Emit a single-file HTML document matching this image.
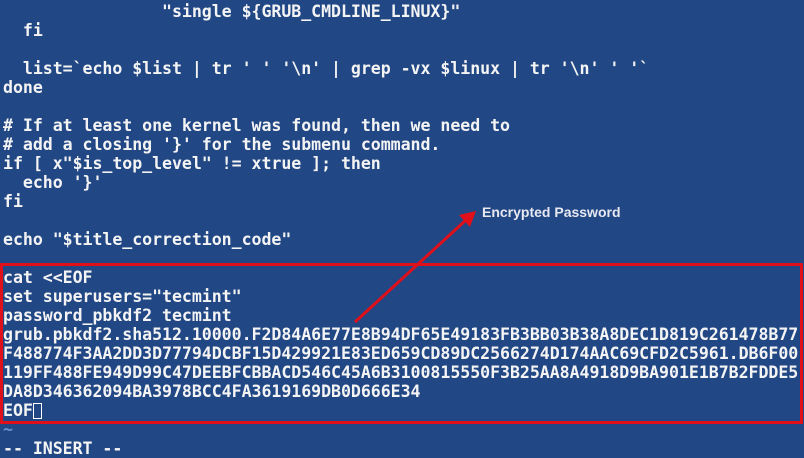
<!DOCTYPE html>
<html><head><meta charset="utf-8"><style>
html,body{margin:0;padding:0;}
body{width:804px;height:456px;background:#214785;overflow:hidden;position:relative;}
pre{position:absolute;left:3px;top:2px;margin:0;font-family:"DejaVu Sans Mono","Liberation Mono",monospace;font-size:16.6px;line-height:19px;color:#f4f4f4;font-weight:bold;letter-spacing:-0.05px;}
.box{position:absolute;left:0px;top:263px;width:797px;height:155px;border:3px solid #e0101a;}
.lbl{position:absolute;left:482px;top:204px;font-family:"Liberation Sans",sans-serif;font-weight:bold;font-size:14px;color:#e8e8f0;}
.cur{display:inline-block;width:9px;height:16px;border:1px solid #fff;vertical-align:-3px;box-sizing:border-box;}
.t{color:#6f8fd0;}
</style></head><body>
<pre>                "single ${GRUB_CMDLINE_LINUX}"
  fi

  list=`echo $list | tr ' ' '\n' | grep -vx $linux | tr '\n' ' '`
done

# If at least one kernel was found, then we need to
# add a closing '}' for the submenu command.
if [ x"$is_top_level" != xtrue ]; then
  echo '}'
fi

echo "$title_correction_code"

cat &lt;&lt;EOF
set superusers="tecmint"
password_pbkdf2 tecmint
grub.pbkdf2.sha512.10000.F2D84A6E77E8B94DF65E49183FB3BB03B38A8DEC1D819C261478B77
F488774F3AA2DD3D77794DCBF15D429921E83ED659CD89DC2566274D174AAC69CFD2C5961.DB6F00
119FF488FE949D99C47DEEBFCBBACD546C45A6B3100815550F3B25AA8A4918D9BA901E1B7B2FDDE5
DA8D346362094BA3978BCC4FA3619169DB0D666E34
EOF<span class="cur"></span>
<span class="t">~</span>
-- INSERT --</pre>
<div class="box"></div>
<svg style="position:absolute;left:0;top:0" width="804" height="456">
<line x1="355" y1="322" x2="466" y2="220" stroke="#e0101a" stroke-width="3"/>
<polygon points="476,211 470,227 459,215" fill="#e0101a"/>
</svg>
<div class="lbl">Encrypted Password</div>
</body></html>
